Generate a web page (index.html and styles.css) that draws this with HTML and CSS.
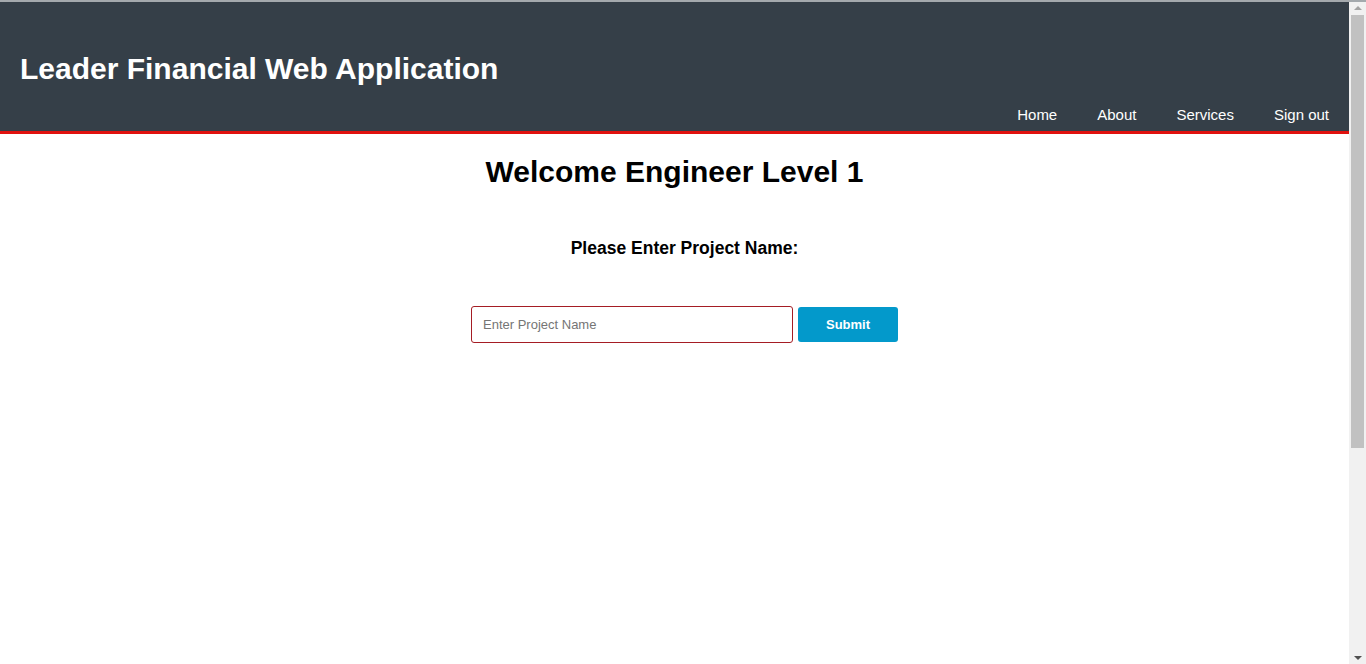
FILE: index.html
```html
<!DOCTYPE html>
<html lang="en">
<head>
<meta charset="utf-8">
<title>Leader Financial Web Application</title>
<link rel="stylesheet" href="styles.css">
</head>
<body>
<div class="window">
  <div class="page">
    <header class="topbar">
      <h1 class="brand">Leader Financial Web Application</h1>
      <nav class="nav">
        <a class="nav-link" href="#">Home</a>
        <a class="nav-link" href="#">About</a>
        <a class="nav-link" href="#">Services</a>
        <a class="nav-link" href="#">Sign out</a>
      </nav>
    </header>
    <main class="content">
      <h2 class="welcome">Welcome Engineer Level 1</h2>
      <section class="project-section">
        <h3 class="prompt">Please Enter Project Name:</h3>
        <form class="project-form">
          <input class="project-input" type="text" placeholder="Enter Project Name">
          <button class="submit-btn" type="button">Submit</button>
        </form>
      </section>
    </main>
  </div>
  <div class="scrollbar" aria-hidden="true">
    <span class="arrow arrow-up"></span>
    <span class="thumb"></span>
    <span class="track-rest"></span>
    <span class="arrow arrow-down"></span>
  </div>
</div>
</body>
</html>
```
FILE: styles.css
```css
html, body {
  margin: 0;
  padding: 0;
}
body {
  font-family: "Liberation Sans", Arial, sans-serif;
  background: #ffffff;
  color: #000;
}
.window {
  display: flex;
  height: 664px;
  box-sizing: border-box;
  border-top: 2px solid #a4a9ad;
  overflow: hidden;
}
.page {
  flex: 1;
  min-width: 0;
}
.scrollbar {
  width: 17px;
  flex: none;
  background: #f1f1f1;
  display: flex;
  flex-direction: column;
  align-items: center;
}
.arrow {
  flex: none;
  width: 0;
  height: 0;
  border-left: 4px solid transparent;
  border-right: 4px solid transparent;
}
.arrow-up {
  margin-top: 4px;
  border-bottom: 4px solid #a3a3a3;
}
.arrow-down {
  margin-bottom: 4px;
  border-top: 4px solid #505050;
}
.thumb {
  flex: none;
  width: 13px;
  height: 433px;
  margin-top: 5px;
  background: #c1c1c1;
}
.track-rest {
  flex: 1;
}
.topbar {
  background: #353f48;
  border-bottom: 3px solid #e0120f;
  padding: 50px 0 7px 0;
}
.brand {
  margin: 0;
  padding: 0 20px;
  font-size: 30px;
  line-height: 34px;
  font-weight: bold;
  color: #ffffff;
}
.nav {
  display: flex;
  justify-content: flex-end;
  margin-top: 20px;
}
.nav-link {
  color: #ffffff;
  text-decoration: none;
  font-size: 15px;
  line-height: 18px;
  padding: 0 20px;
}
.content {
  display: flex;
  flex-direction: column;
  align-items: center;
}
.welcome {
  margin: 21px 0 0 0;
  font-size: 30px;
  line-height: 34px;
  font-weight: bold;
}
.project-section {
  display: flex;
  flex-direction: column;
  align-items: center;
  padding-left: 20px;
}
.prompt {
  margin: 49px 0 0 0;
  font-size: 17.5px;
  line-height: 21px;
  font-weight: bold;
}
.project-form {
  display: flex;
  align-items: center;
  gap: 5px;
  margin-top: 47px;
}
.project-input {
  box-sizing: border-box;
  width: 322px;
  height: 37px;
  border: 1px solid #a51d24;
  border-radius: 3px;
  padding: 0 11px;
  font-family: "Liberation Sans", Arial, sans-serif;
  font-size: 13px;
  color: #333;
  outline: none;
}
.project-input::placeholder {
  color: #757575;
}
.submit-btn {
  box-sizing: border-box;
  width: 100px;
  height: 35px;
  border: none;
  border-radius: 3px;
  background: #0399cb;
  color: #ffffff;
  font-family: "Liberation Sans", Arial, sans-serif;
  font-size: 13px;
  font-weight: bold;
}
```
